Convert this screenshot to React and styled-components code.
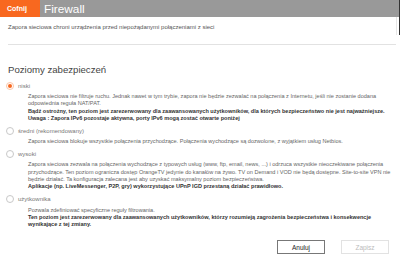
import React, { useState } from "react";
import styled, { createGlobalStyle } from "styled-components";

const Global = createGlobalStyle`
  html, body { margin: 0; padding: 0; background: #fff; }
  body { font-family: "Liberation Sans", Arial, sans-serif; width: 400px; height: 264px; overflow: hidden; }
  * { box-sizing: border-box; }
`;

const Page = styled.div`
  width: 400px;
  height: 264px;
  display: flex;
  flex-direction: column;
`;

const Top = styled.div`
  border-right: 1px solid #333;
  display: flex;
  flex-direction: column;
`;

const Header = styled.div`
  height: 17px;
  background: #999999;
  display: flex;
  align-items: stretch;
`;

const BackButton = styled.div`
  width: 40px;
  background: #f8681f;
  color: #fff;
  font-size: 7px;
  font-weight: bold;
  display: flex;
  align-items: center;
  padding-left: 7px;
`;

const Title = styled.div`
  color: #fff;
  font-size: 11.8px;
  display: flex;
  align-items: center;
  padding-left: 4px;
  padding-top: 1px;
`;

const Intro = styled.div`
  height: 18px;
  margin-right: 2px;
  border-right: 1px solid #e6e6e6;
  font-size: 6px;
  color: #555;
  display: flex;
  align-items: center;
  padding-left: 8px;
  padding-top: 1px;
`;

const Separator = styled.div`
  height: 1px;
  background: #e2e2e2;
  margin: 9px 4px 0 8px;
`;

const SectionTitle = styled.div`
  font-size: 9.6px;
  color: #444;
  padding-left: 8px;
  margin-top: 19px;
  line-height: 12px;
`;

const Options = styled.div`
  display: flex;
  flex-direction: column;
  margin-top: 5px;
  gap: 4px;
`;

const Option = styled.div`
  display: flex;
  flex-direction: column;
`;

const OptionLabel = styled.label`
  display: flex;
  align-items: center;
  gap: 4px;
  height: 9px;
  padding-left: 6px;
  font-size: 6px;
  color: #777;
  cursor: pointer;
`;

const Radio = styled.span`
  width: 8px;
  height: 8px;
  border-radius: 50%;
  border: 1px solid ${(p) => (p.$checked ? "#fbc6a8" : "#c8c8c8")};
  background: #fff;
  display: flex;
  align-items: center;
  justify-content: center;
  &::after {
    content: "";
    width: 4px;
    height: 4px;
    border-radius: 50%;
    background: ${(p) => (p.$checked ? "#f8681f" : "transparent")};
  }
`;

const Desc = styled.div`
  padding: 3px 7px 0 28px;
  font-size: 5.55px;
  line-height: 7.3px;
  color: #666;
`;

const Strong = styled.div`
  font-weight: bold;
  color: #333;
`;

const Footer = styled.div`
  margin-top: auto;
  display: flex;
  justify-content: flex-end;
  gap: 16px;
  padding: 0 11px 10px 0;
`;

const Button = styled.button`
  width: 48px;
  height: 14px;
  padding: 0;
  font-family: inherit;
  font-size: 6.5px;
  background: #fff;
  color: ${(p) => (p.$disabled ? "#bbb" : "#222")};
  border: 1px solid ${(p) => (p.$disabled ? "#e2e2e2" : "#777")};
  cursor: pointer;
`;

const options = [
  {
    id: "niski",
    label: "niski",
    text: "Zapora sieciowa nie filtruje ruchu. Jednak nawet w tym trybie, zapora nie będzie zezwalać na połączenia z Internetu, jeśli nie zostanie dodana odpowiednia reguła NAT/PAT.",
    strong: [
      "Bądź ostrożny, ten poziom jest zarezerwowany dla zaawansowanych użytkowników, dla których bezpieczeństwo nie jest najważniejsze.",
      "Uwaga : Zapora IPv6 pozostaje aktywna, porty IPv6 mogą zostać otwarte poniżej",
    ],
  },
  {
    id: "sredni",
    label: "średni (rekomendowany)",
    text: "Zapora sieciowa blokuje wszystkie połączenia przychodzące. Połączenia wychodzące są dozwolone, z wyjątkiem usług Netbios.",
    strong: [],
  },
  {
    id: "wysoki",
    label: "wysoki",
    text: "Zapora sieciowa zezwala na połączenia wychodzące z typowych usług (www, ftp, email, news, ...) i odrzuca wszystkie nieoczekiwane połączenia przychodzące. Ten poziom ogranicza dostęp OrangeTV jedynie do kanałów na żywo. TV on Demand i VOD nie będą dostępne. Site-to-site VPN nie będzie działać. Ta konfiguracja zalecana jest aby uzyskać maksymalny poziom bezpieczeństwa.",
    strong: [
      "Aplikacje (np. LiveMessenger, P2P, gry) wykorzystujące UPnP IGD przestaną działać prawidłowo.",
    ],
  },
  {
    id: "uzytkownika",
    label: "użytkownika",
    text: "Pozwala zdefiniować specyficzne reguły filtrowania.",
    strong: [
      "Ten poziom jest zarezerwowany dla zaawansowanych użytkowników, którzy rozumieją zagrożenia bezpieczeństwa i konsekwencje wynikające z tej zmiany.",
    ],
  },
];

export default function App() {
  const [level, setLevel] = useState("niski");
  return (
    <Page>
      <Global />
      <Top>
        <Header>
          <BackButton>Cofnij</BackButton>
          <Title>Firewall</Title>
        </Header>
        <Intro>Zapora sieciowa chroni urządzenia przed niepożądanymi połączeniami z sieci</Intro>
      </Top>
      <Separator />
      <SectionTitle>Poziomy zabezpieczeń</SectionTitle>
      <Options>
        {options.map((o) => (
          <Option key={o.id}>
            <OptionLabel onClick={() => setLevel(o.id)}>
              <Radio $checked={level === o.id} />
              {o.label}
            </OptionLabel>
            <Desc>
              {o.text}
              {o.strong.map((s) => (
                <Strong key={s}>{s}</Strong>
              ))}
            </Desc>
          </Option>
        ))}
      </Options>
      <Footer>
        <Button>Anuluj</Button>
        <Button $disabled>Zapisz</Button>
      </Footer>
    </Page>
  );
}
